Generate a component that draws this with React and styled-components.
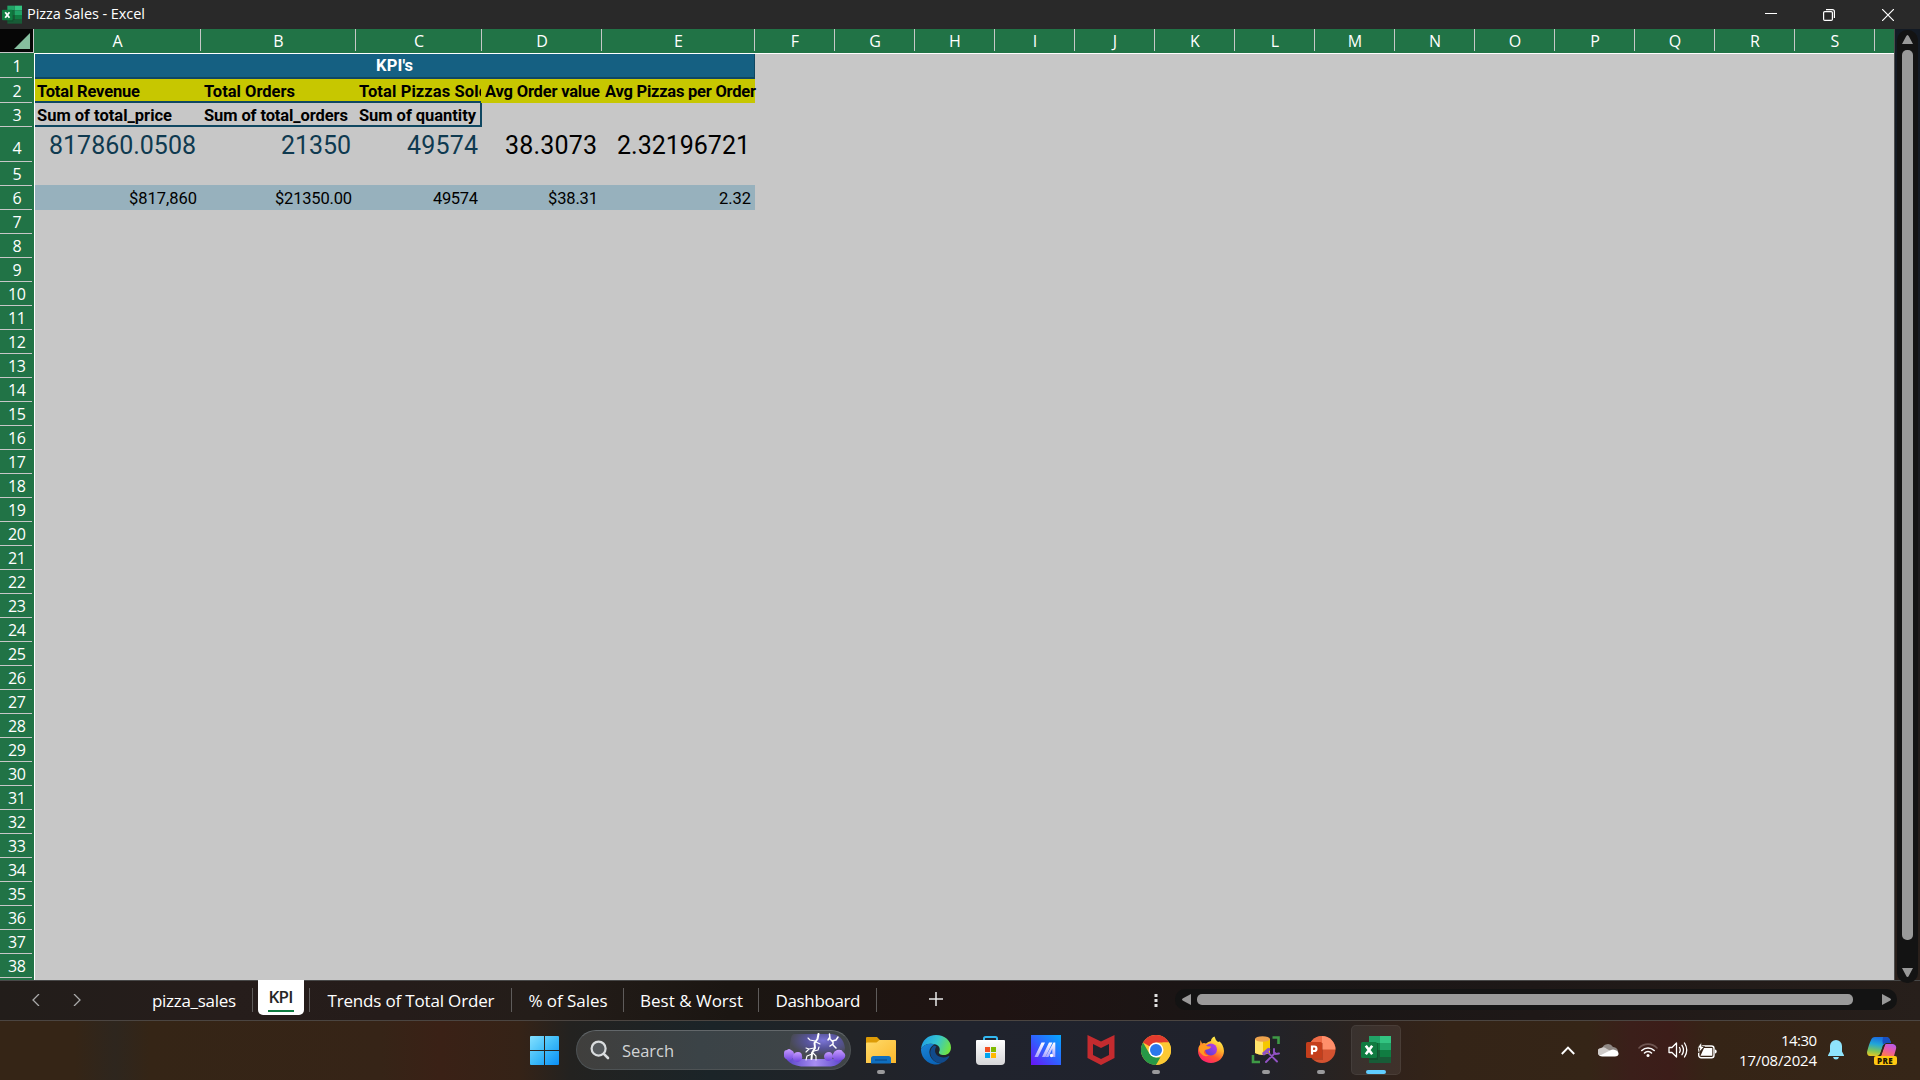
import React, { useLayoutEffect, useRef, useState } from "react";
import styled, { createGlobalStyle } from "styled-components";

const ui = `"Open Sans", "Noto Sans", sans-serif`;
const cellFont = `Roboto, "Liberation Sans", sans-serif`;

const Global = createGlobalStyle`
  *, *::before, *::after { box-sizing: border-box; }
  html, body { margin: 0; padding: 0; background: #262626; overflow: hidden; }
  svg { display: block; flex: none; }
`;

const FitSpan = styled.span`
  display: block;
  flex: none;
  white-space: pre;
`;

function Fit({ width, children }) {
  const ref = useRef(null);
  const [spacing, setSpacing] = useState(null);
  useLayoutEffect(() => {
    const range = document.createRange();
    range.selectNodeContents(ref.current);
    const natural = range.getBoundingClientRect().width;
    setSpacing((width - natural) / Math.max(1, String(children).length - 1));
  }, [width, children]);
  return (
    <FitSpan ref={ref} style={spacing === null ? undefined : { letterSpacing: spacing + "px", marginRight: -spacing + "px" }}>
      {children}
    </FitSpan>
  );
}

/* ---------- window ---------- */
const Window = styled.div`
  width: 1920px;
  height: 1080px;
  display: flex;
  flex-direction: column;
  overflow: hidden;
  background: #262626;
  font-family: ${ui};
`;

const TitleBar = styled.header`
  height: 29px;
  flex: none;
  display: flex;
  align-items: center;
  background: #292929;
  color: #fff;
  padding-left: 2px;
`;

const Title = styled.div`
  flex: 1;
  padding-left: 5px;
  font-size: 14.5px;
  line-height: 28px;
  height: 29px;
  display: flex;
`;

const WindowButtons = styled.div`
  display: flex;
  align-items: center;
  padding-right: 3px;
`;

const WindowButton = styled.div`
  width: 58.5px;
  height: 29px;
  display: flex;
  align-items: center;
  justify-content: center;
`;

const Workspace = styled.main`
  height: 951px;
  flex: none;
  display: flex;
  background: #1b1a1a;
`;

const Sheet = styled.section`
  width: 1894px;
  flex: none;
  display: flex;
  flex-direction: column;
  background: #c7c7c7;
`;

const ColumnHeads = styled.div`
  height: 24px;
  flex: none;
  display: flex;
  align-items: flex-start;
  background: #217346;
  color: #fff;
`;

const Corner = styled.div`
  width: 34px;
  height: 23px;
  flex: none;
  background: #060606;
  border-right: 1px solid #c7c7c7;
  display: flex;
  align-items: flex-end;
  justify-content: flex-end;
  padding: 0 3px 3px 0;
`;

const ColumnHead = styled.div`
  width: ${(p) => p.$w}px;
  height: 22px;
  flex: none;
  border-right: 1px solid #c7c7c7;
  font-size: 16px;
  line-height: 25px;
  padding-left: 1px;
  text-align: center;
`;

const SheetBody = styled.div`
  height: 927px;
  display: flex;
`;

const RowHeads = styled.div`
  width: 34px;
  flex: none;
  background: #217346;
  color: #fff;
  padding-right: 2px;
  margin-top: -1px;
  border-top: 1px solid #c7c7c7;
  overflow: hidden;
`;

const RowHead = styled.div`
  height: ${(p) => p.$h}px;
  border-bottom: 1px solid #c7c7c7;
  font-size: 16px;
  line-height: ${(p) => p.$h + (p.$h > 30 ? 7 : 1)}px;
  display: flex;
  justify-content: center;
  padding-left: 2px;
`;

const Cells = styled.div`
  flex: 1;
  border-left: 1px solid #fff;
  border-top: 1px solid #fff;
  font-family: ${cellFont};
  color: #000;
  display: flex;
  flex-direction: column;
  align-items: flex-start;
`;

const MergedTitle = styled.div`
  width: 720px;
  height: 25px;
  background: #156082;
  border-bottom: 2px solid #0f4761;
  border-right: 1px solid #0f4761;
  color: #fff;
  font-weight: 700;
  font-size: 16.5px;
  line-height: 23px;
  display: flex;
  justify-content: center;
`;

const HeadingRow = styled.div`
  width: 720px;
  height: 24px;
  background: #c7c700;
  display: flex;
  font-weight: 700;
  font-size: 16.5px;
  line-height: 25px;
`;

const PivotRow = styled(HeadingRow)`
  background: transparent;
`;

const TextCell = styled.div`
  width: ${(p) => p.$w}px;
  flex: none;
  padding-left: ${(p) => p.$pad ?? 2}px;
  display: flex;
  overflow: ${(p) => (p.$clip ? "hidden" : "visible")};
  border-bottom: ${(p) => (p.$line ? "2px solid #0f4761" : "0")};
  border-right: ${(p) => (p.$edge ? "2px solid #0f4761" : "0")};
`;

const BigRow = styled.div`
  width: 720px;
  height: 58px;
  display: flex;
  font-size: 25px;
  line-height: 38px;
`;

const TotalsRow = styled.div`
  width: 720px;
  height: 25px;
  background: #97b1bd;
  display: flex;
  font-size: 16.5px;
  line-height: 27px;
`;

const NumberCell = styled.div`
  width: ${(p) => p.$w}px;
  flex: none;
  display: flex;
  justify-content: flex-end;
  padding-right: ${(p) => p.$pad ?? 4}px;
  color: ${(p) => (p.$pivot ? "#0f3a50" : "#000")};
`;

const VerticalGutter = styled.aside`
  flex: 1;
  padding: 1px 2px 0 2px;
  border-left: 1px solid #4b4b4b;
  background: linear-gradient(#131a24, #171b22 30%, #201b1a 70%, #2a201b);
`;

const VerticalTrack = styled.div`
  height: 953px;
  width: 21px;
  position: relative;
  border-radius: 10px;
  background: #131313;
  display: flex;
  flex-direction: column;
  align-items: center;
  padding-top: 5px;
`;

const VerticalThumb = styled.div`
  width: 11px;
  height: 890px;
  margin: 6px 0 28px;
  border-radius: 5px;
  background: #999;
`;

/* ---------- sheet tabs ---------- */
const TabBar = styled.nav`
  height: 40px;
  flex: none;
  display: flex;
  align-items: flex-start;
  background: linear-gradient(90deg, #221d1a 0, #261d1b 12%, #251c1a 20%, #241d19 28%, #1b1612 38%, #1f1312 52%, #191616 66%, #1e1817 80%, #271f1b 100%);
  box-shadow: inset 0 1px #484848;
  color: #fff;
  font-size: 17px;
`;

const TabArrows = styled.div`
  width: 135px;
  height: 39px;
  display: flex;
  align-items: center;
  gap: 33px;
  padding-left: 32px;
`;

const Tab = styled.div`
  width: ${(p) => p.$w}px;
  height: 40px;
  flex: none;
  display: flex;
  justify-content: center;
  padding-left: 1px;
  line-height: 41px;
`;

const TabDivider = styled.div`
  width: 1px;
  height: 24px;
  margin-top: 8px;
  flex: none;
  background: #5f5c5b;
`;

const ActiveTab = styled.div`
  width: 46px;
  height: 35px;
  margin: 0 5px;
  flex: none;
  background: #fff;
  border-radius: 0 0 5px 5px;
  color: #262626;
  font-weight: 600;
  display: flex;
  flex-direction: column;
  align-items: center;
  line-height: 33px;
`;

const ActiveMark = styled.div`
  width: 26px;
  height: 2px;
  margin-top: -3px;
  flex: none;
  background: #107c41;
`;

const AddSheet = styled.div`
  width: 118px;
  height: 38px;
  display: flex;
  align-items: center;
  justify-content: center;
`;

const BarSpacer = styled.div`
  flex: 1;
`;

const HorizontalTrack = styled.div`
  width: 722px;
  height: 21px;
  margin: 9px 23px 0 17px;
  border-radius: 10px;
  background: #131313;
  display: flex;
  align-items: center;
  padding-left: 7px;
`;

const HorizontalThumb = styled.div`
  width: 656px;
  height: 11px;
  margin: 0 29px 0 6px;
  border-radius: 5px;
  background: #999;
`;

/* ---------- taskbar ---------- */
const Taskbar = styled.footer`
  height: 60px;
  flex: none;
  display: flex;
  border-top: 1px solid #4b4541;
  color: #fff;
  background: linear-gradient(90deg, #352516 0, #352516 75px, #2e261e 115px, #352516 150px, #362417 380px, #3a2116 440px, #352317 520px, #232220 570px, #1b2428 710px, #212328 850px, #20232d 960px, #20222c 1240px, #262323 1320px, #30221b 1390px, #342417 1450px, #352517 1590px, #3b1f1a 1630px, #3c1d19 1670px, #352416 1710px, #362618 1920px);
`;

const StartButton = styled.div`
  width: 576px;
  flex: none;
  padding: 15px 0 0 530px;
`;

const SearchBox = styled.div`
  width: 275px;
  height: 40px;
  margin-top: 9px;
  flex: none;
  display: flex;
  align-items: center;
  border-radius: 20px;
  border: 1px solid #4e5355;
  border-top-color: #62676a;
  background: linear-gradient(90deg, #403f3d, #3b4347 45%, #404548);
  padding: 0 4px 0 13px;
  color: #d2d4d5;
  font-size: 16.5px;
`;

const SearchLabel = styled.div`
  flex: 1;
  display: flex;
  padding-left: 12px;
  line-height: 41px;
`;

const Apps = styled.div`
  display: flex;
  padding-left: 2.5px;
  flex: 1;
`;

const AppSlot = styled.div`
  width: 55px;
  height: 59px;
  flex: none;
  display: flex;
  justify-content: center;
  padding-top: 4px;
`;

const AppTile = styled.div`
  width: 50px;
  height: 50px;
  border-radius: 5px;
  display: flex;
  flex-direction: column;
  align-items: center;
  justify-content: space-between;
  padding: 10px 0 1px;
  background: ${(p) => (p.$active ? "rgba(255,255,255,0.07)" : "transparent")};
  box-shadow: ${(p) => (p.$active ? "inset 0 0 0 1px rgba(255,255,255,0.06)" : "none")};
`;

const RunningMark = styled.div`
  width: ${(p) => (p.$active ? 20 : 8)}px;
  height: 4px;
  border-radius: 2px;
  background: ${(p) => (p.$active ? "#60cdff" : "#9a9a9c")};
`;

const Tray = styled.div`
  width: 359px;
  flex: none;
  display: flex;
  align-items: center;
  height: 58px;
`;

const TrayItem = styled.div`
  width: ${(p) => p.$w}px;
  flex: none;
  display: flex;
  justify-content: center;
`;

const Clock = styled.div`
  width: 94px;
  flex: none;
  display: flex;
  flex-direction: column;
  align-items: flex-end;
  font-size: 15px;
  line-height: 20px;
  padding-bottom: 1px;
`;

/* ---------- icons ---------- */
const ExcelIcon = ({ size }) => (
  <svg width={size} height={size} viewBox="0 0 30 30">
    <rect x="8" y="1" width="11" height="7" fill="#21a366" />
    <rect x="19" y="1" width="11" height="7" fill="#33c481" />
    <rect x="8" y="8" width="11" height="7" fill="#107c41" />
    <rect x="19" y="8" width="11" height="7" fill="#21a366" />
    <rect x="8" y="15" width="11" height="7" fill="#185c37" />
    <rect x="19" y="15" width="11" height="7" fill="#107c41" />
    <rect x="8" y="22" width="22" height="6" fill="#185c37" />
    <rect x="8" y="8" width="9" height="17" fill="#0b4a28" opacity=".5" />
    <rect x="0" y="7" width="16" height="16" rx="1.5" fill="#107c41" />
    <path d="M4.800 10.800l6.400 8.400M11.200 10.800l-6.400 8.400" stroke="#fff" strokeWidth="2.700" />
  </svg>
);

const StartIcon = () => (
  <svg width="29" height="29" viewBox="0 0 29 29">
    <defs>
      <linearGradient id="win" x1="0" y1="0" x2="1" y2="1">
        <stop offset="0" stopColor="#84e0ff" />
        <stop offset=".5" stopColor="#3fbcf8" />
        <stop offset="1" stopColor="#0a8ef5" />
      </linearGradient>
    </defs>
    <path d="M1 0h13v14H0V1a1 1 0 011-1zM15 0h13a1 1 0 011 1v13H15zM0 15h14v14H1a1 1 0 01-1-1zM15 15h14v13a1 1 0 01-1 1H15z" fill="url(#win)" />
  </svg>
);

const SearchIcon = () => (
  <svg width="20" height="20" viewBox="0 0 20 20" fill="none" stroke="#d9dcde">
    <circle cx="8.6" cy="8.6" r="7" strokeWidth="2.2" fill="#55595c" />
    <path d="M13.8 13.8l4.2 4.2" strokeWidth="2.6" strokeLinecap="round" />
  </svg>
);

const StormArt = () => (
  <svg width="62" height="34" viewBox="0 0 62 34">
    <defs>
      <radialGradient id="sky" cx=".6" cy=".25" r=".6">
        <stop offset="0" stopColor="#7a74d6" />
        <stop offset=".5" stopColor="#57549a" />
        <stop offset="1" stopColor="#484a52" />
      </radialGradient>
      <linearGradient id="tree" x1="0" y1="0" x2="0" y2="1">
        <stop offset="0" stopColor="#c79bff" />
        <stop offset="1" stopColor="#6f45dd" />
      </linearGradient>
      <linearGradient id="land">
        <stop offset="0" stopColor="#5a45c8" />
        <stop offset=".5" stopColor="#a78ef2" />
        <stop offset="1" stopColor="#5a45c8" />
      </linearGradient>
    </defs>
    <path d="M10 1h38q11 1 13 14-1 8-6 12H8Q4 18 7 5q1-4 3-4z" fill="url(#sky)" />
    <path d="M3 27q4 5 14 6.500h30q8-1 12-7.500H3z" fill="url(#land)" />
    <g fill="url(#tree)">
      <path d="M0 20q0-3 3-3 2-2 4 0 3 1 3 4 1 4-2 5l-3 2-3-2q-3-2-2-6z" />
      <path d="M9 23q1-4 5-4 4 0 4 4 1 3-2 5-3 2-5 0-3-2-2-5z" />
      <path d="M49 21q1-3 4-4 5-1 6 2 3 2 2 5-1 3-5 3-3 3-6 0-2-3-1-6z" />
      <path d="M40 23q1-4 5-4 3 0 4 4 0 4-4 5-5 0-5-5z" />
    </g>
    <g fill="none" stroke="#fff" strokeLinejoin="round" strokeLinecap="round">
      <path d="M34.500 1l-1 5-3 4 .5 5-3 5-.5 6" strokeWidth="2" />
      <path d="M31 8l-5-1-2-2M32 9l4 2M30 15l-5 1-3 3M25 16l-3-1M30 18l4-1 1-3M28 21l-5 2-1 4M29 20l3 3v4" strokeWidth="1.100" />
      <path d="M45.500 1l.5 5 3 3 0 3 3 3M46 4l-2 3M48 8l4-1 2-3M49 11l-3 2" strokeWidth="1.500" />
    </g>
  </svg>
);

const FolderIcon = () => (
  <svg width="30" height="30" viewBox="0 0 30 30">
    <defs>
      <linearGradient id="fold" x1="0" y1="0" x2="1" y2="1">
        <stop offset="0" stopColor="#ffdb6b" />
        <stop offset="1" stopColor="#fbb72b" />
      </linearGradient>
    </defs>
    <path d="M0 3a1 1 0 011-1h10l3 3h14v5H0z" fill="#dd9b06" />
    <path d="M0 8.500q0-1 1-1h9.500l3-2.500H29a1 1 0 011 1v22H0z" fill="url(#fold)" />
    <path d="M5 28.500v-5a2.500 2.500 0 012.500-2.500h15a2.500 2.500 0 012.500 2.500v5z" fill="#0f6fc0" />
    <path d="M9 25h12" stroke="#0a4a8a" strokeWidth="1.200" />
  </svg>
);

const EdgeIcon = () => (
  <svg width="30" height="30" viewBox="0 0 30 30">
    <defs>
      <linearGradient id="eg" x1="0" y1=".3" x2="1" y2=".6">
        <stop offset="0" stopColor="#1f9fe6" />
        <stop offset=".5" stopColor="#35c5cf" />
        <stop offset="1" stopColor="#72e43e" />
      </linearGradient>
      <linearGradient id="eb" x1="0" y1="0" x2=".5" y2="1">
        <stop offset="0" stopColor="#1b86d6" />
        <stop offset="1" stopColor="#0a64b8" />
      </linearGradient>
    </defs>
    <path d="M0 14C1 5 7 0 15 0c9 0 15 6 15 12.500 0 5-3.500 7.500-7 7.500-4 0-5.500-1.500-5-3 1.500-2 1-6-3-7.500C9 7.500 3 9 0 14z" fill="url(#eg)" />
    <path d="M0 14c3-5 9-6 13.500-4.500C10 11 8 14 8.500 18c.7 6 5.500 10 12 10.500A15 15 0 010 14z" fill="url(#eb)" />
    <path d="M13 10.500c-4 3-5 8-2 12.500 3 4.500 8 6.500 12 4 2-1 4-3 5.300-5.200.2-.6-.5-1-1-.6-5 2.500-11 1-12.800-3.200-1-2.500-.3-5 1-6.500z" fill="#114a8b" />
  </svg>
);

const StoreIcon = () => (
  <svg width="30" height="30" viewBox="0 0 30 30">
    <defs>
      <linearGradient id="bag" x1="0" y1="0" x2="0" y2="1">
        <stop offset="0" stopColor="#fff" />
        <stop offset="1" stopColor="#d6d6d8" />
      </linearGradient>
    </defs>
    <path d="M8 7V3.500Q8 2 9.500 2h10q1.500 0 1.500 1.500V7" fill="none" stroke="#33b8f0" strokeWidth="2" />
    <path d="M0 6q0-1 1-1h27q1 0 1 1v20q0 4-4 4H4q-4 0-4-4z" fill="url(#bag)" />
    <path d="M9 12h5v5H9z" fill="#f25022" />
    <path d="M15 12h5v5h-5z" fill="#7fba00" />
    <path d="M9 18h5v5H9z" fill="#00a4ef" />
    <path d="M15 18h5v5h-5z" fill="#ffb900" />
  </svg>
);

const AsusIcon = () => (
  <svg width="30" height="30" viewBox="0 0 30 30">
    <defs>
      <linearGradient id="asus" x1="0" y1="1" x2="1" y2="0">
        <stop offset="0" stopColor="#6a12f5" />
        <stop offset=".5" stopColor="#2f62ff" />
        <stop offset="1" stopColor="#05a8ff" />
      </linearGradient>
      <linearGradient id="asusm" x1="0" y1="0" x2="0" y2="1">
        <stop offset="0" stopColor="#fff" />
        <stop offset="1" stopColor="#a9a4ff" />
      </linearGradient>
    </defs>
    <rect width="30" height="30" fill="url(#asus)" />
    <g fill="url(#asusm)">
      <path d="M10.500 7.500H14L7 22H3.500zM18 7.500h3.500L14.500 22H11z" />
      <path d="M22.500 7.500h1.800V22h-3v-8.500L17.500 22h-3z" />
    </g>
    <circle cx="20.500" cy="20.500" r="1.700" fill="#fff" />
  </svg>
);

const McAfeeIcon = () => (
  <svg width="28" height="30" viewBox="0 0 28 30">
    <path fillRule="evenodd" d="M.5 0L14 6.500 27.500 0v23L14 30 .5 23zM6 9v11l8 4 8-4V9l-8 4z" fill="#c42b2f" />
  </svg>
);

const ChromeIcon = () => (
  <svg width="30" height="30" viewBox="0 0 30 30">
    <circle cx="15" cy="15" r="15" fill="#fcc934" />
    <path d="M2 7.500A15 15 0 0128 7.500H15L8.500 11.300z" fill="#e33b2e" />
    <path d="M2 7.500L8.500 18.800 15 22.500h6.500L15 30A15 15 0 012 7.500z" fill="#279847" />
    <path d="M28 7.500A15 15 0 0115 30l6.500-11.200V7.500z" fill="#fcc934" />
    <circle cx="15" cy="15" r="7.500" fill="#fff" />
    <circle cx="15" cy="15" r="6" fill="#2b78ec" />
  </svg>
);

const FirefoxIcon = () => (
  <svg width="28" height="30" viewBox="0 0 28 30">
    <defs>
      <linearGradient id="ff" x1=".8" y1=".1" x2=".3" y2="1">
        <stop offset="0" stopColor="#fff04a" />
        <stop offset=".35" stopColor="#ffb02c" />
        <stop offset=".65" stopColor="#ff5530" />
        <stop offset="1" stopColor="#ff1f70" />
      </linearGradient>
      <linearGradient id="ffp" x1="1" y1="0" x2="0" y2="1">
        <stop offset="0" stopColor="#c63ce8" />
        <stop offset="1" stopColor="#4c3fd0" />
      </linearGradient>
    </defs>
    <path d="M3.500 5l1.500 3.500q2-1 4 0 2-2 5-2.500 0-3 3.500-4.500 1 4 3.500 5.500l1.500-.5q4 3 4.500 9.500C27 23 21 28 14 28S1 23 1 16c0-3 1-5 2-6z" fill="url(#ff)" />
    <circle cx="14" cy="14.500" r="6" fill="url(#ffp)" />
    <path d="M2 11q3-2 6-1 3 2 6 1.500 0 2-4 3-3 0-3 3 1 3 5 3-5 2-8-2-3-3-2-7.500z" fill="#ff9a20" />
  </svg>
);

const SqlIcon = () => (
  <svg width="30" height="30" viewBox="0 0 30 30">
    <path d="M4 4v14q7 3 15 0V4z" fill="#f6c800" />
    <path d="M4 4v14q4 2 8 2V4z" fill="#ffe36a" />
    <ellipse cx="11.500" cy="4" rx="7.500" ry="2.800" fill="#eda34d" />
    <path d="M21.500 2.500h6v6.500" fill="none" stroke="#3f9a46" strokeWidth="2.600" />
    <path d="M2 20v7h7" fill="none" stroke="#3f9a46" strokeWidth="2.600" />
    <g fill="none" stroke="#9152c4" strokeWidth="1.900" strokeLinecap="round">
      <path d="M16.500 17l9.500 9.500M24 18l-9 9M23 14v3.500l1.500 1.500 3.500-.5" />
      <path d="M13 18.500l4.500-4" strokeWidth="3.400" />
    </g>
  </svg>
);

const PowerPointIcon = () => (
  <svg width="30" height="30" viewBox="0 0 30 30">
    <circle cx="16" cy="14.500" r="13.500" fill="#d35230" />
    <path d="M16 1v13.500H2.500A13.500 13.500 0 0116 1z" fill="#ed6c47" />
    <path d="M16 1a13.500 13.500 0 0113.500 13.500H16z" fill="#ff8f6b" />
    <path d="M3 8h14v17H6z" fill="#8e2a12" opacity=".4" />
    <rect x="0" y="7" width="16" height="16" rx="1.500" fill="#c43e1c" />
    <path d="M6 19.500v-8h2.200a2.200 2.200 0 010 4.500H6" fill="none" stroke="#fff" strokeWidth="2.200" />
  </svg>
);

const CloudIcon = () => (
  <svg width="21" height="14" viewBox="0 0 21 14">
    <path d="M4 6a6 6 0 0111-2 5 5 0 015 6L10 12z" fill="#8f8884" />
    <path d="M3 5q3-2 6 1l6 3-9 4H4A4 4 0 013 5z" fill="#cfcbc9" />
    <path d="M3 12l10-5q2-1 4 0 4 1 3.500 4.500Q20 13.500 17 13.500H4.500Q2.500 13.500 1 12z" fill="#fff" />
  </svg>
);

const WifiIcon = () => (
  <svg width="20" height="16" viewBox="0 0 20 16" fill="none" stroke="#fff" strokeWidth="1.600" strokeLinecap="round">
    <path d="M1 6a12.500 12.500 0 0118 0" stroke="#6f5652" />
    <path d="M3.800 8.500a9 9 0 0112.400 0M6.500 11a5 5 0 017 0" />
    <circle cx="10" cy="13.500" r="1.500" fill="#fff" stroke="none" />
  </svg>
);

const SpeakerIcon = () => (
  <svg width="20" height="18" viewBox="0 0 20 18" fill="none" stroke="#fff" strokeWidth="1.300" strokeLinecap="round" strokeLinejoin="round">
    <path d="M1 6.500h3l4.500-4.500v14L4 11.500H1z" />
    <path d="M11.500 6.500q1.500 2.500 0 5M14 4.300q3 4.700 0 9.400M16.500 2q4.500 7 0 14" />
  </svg>
);

const BatteryIcon = () => (
  <svg width="20" height="17" viewBox="0 0 20 17">
    <rect x="1.700" y="4" width="15.300" height="11.800" rx="2.500" fill="none" stroke="#fff" strokeWidth="1.400" />
    <path d="M7 6h8.300v7.800H3.500z" fill="#fff" />
    <path d="M18 7.500q1.700 0 1.700 2t-1.700 2z" fill="#fff" />
    <path d="M4.500 0L.3 6h2.500L1.500 11 7.500 4.500H4.800z" fill="#fff" stroke="#352416" strokeWidth=".8" />
  </svg>
);

const BellIcon = () => (
  <svg width="16" height="20" viewBox="0 0 16 20" fill="#8fe3fb">
    <path d="M8 0a6 6 0 016 6v5.500l2 3.700q.2.800-.7.800H.7q-.9 0-.7-.8l2-3.700V6a6 6 0 016-6zM5 17h6q-.6 2.500-3 2.500T5 17z" />
  </svg>
);

const CopilotWrap = styled.div`
  position: relative;
  width: 30px;
  height: 29px;
`;

const PreBadge = styled.div`
  position: absolute;
  left: 7px;
  top: 20px;
  width: 23px;
  height: 9px;
  border-radius: 2px;
  background: #ffc812;
  color: #1c1600;
  font: 800 8px/9px ${ui};
  text-align: center;
  letter-spacing: 0.4px;
`;

const CopilotIcon = () => (
  <CopilotWrap>
    <svg width="30" height="29" viewBox="0 0 30 29">
      <defs>
        <linearGradient id="cpa" x1=".3" y1="0" x2=".1" y2="1">
          <stop offset="0" stopColor="#1b6fe0" />
          <stop offset=".35" stopColor="#21a6d8" />
          <stop offset=".7" stopColor="#7cc45a" />
          <stop offset="1" stopColor="#f2c81c" />
        </linearGradient>
        <linearGradient id="cpb" x1=".8" y1="0" x2=".3" y2="1">
          <stop offset="0" stopColor="#b45cf0" />
          <stop offset=".5" stopColor="#e85aa8" />
          <stop offset="1" stopColor="#ff7a50" />
        </linearGradient>
      </defs>
      <path d="M8 1h11q3 0 4 3l1 3h-5q-2 0-3 3l-3 8q-1 2-3 2H3q-3 0-3-4Q2 8 4 4q1-3 4-3z" fill="url(#cpa)" />
      <path d="M16 1h3q3 0 4 3l1 3h-5q-2 0-3 2-1-4 0-8z" fill="#184fc0" />
      <path d="M19 8h7q4 1 3 5l-2 7H14l3-9q1-3 2-3z" fill="url(#cpb)" />
      <path d="M16 9l2 0-4 11h-3q2-1 3-4z" fill="#352416" />
    </svg>
    <PreBadge>PRE</PreBadge>
  </CopilotWrap>
);

/* ---------- data ---------- */
const columns = [
  ["A", 167], ["B", 155], ["C", 126], ["D", 120], ["E", 153],
  ..."FGHIJKLMNOPQRS".split("").map((l) => [l, 80]),
];
const rowHeights = [25, 25, 24, 35, 24, 24, ...Array(32).fill(24)];
const tabs = [
  ["Trends of Total Order", 201, 167],
  ["% of Sales", 111, 79],
  ["Best & Worst", 134, 103],
  ["Dashboard", 117, 85],
];
const apps = [
  { icon: <FolderIcon />, running: true },
  { icon: <EdgeIcon /> },
  { icon: <StoreIcon /> },
  { icon: <AsusIcon /> },
  { icon: <McAfeeIcon /> },
  { icon: <ChromeIcon />, running: true },
  { icon: <FirefoxIcon /> },
  { icon: <SqlIcon />, running: true },
  { icon: <PowerPointIcon />, running: true },
  { icon: <ExcelIcon size={30} />, running: true, active: true },
];

export default function App() {
  return (
    <>
      <Global />
      <Window>
        <TitleBar>
          <ExcelIcon size={20} />
          <Title><Fit width={118}>Pizza Sales - Excel</Fit></Title>
          <WindowButtons>
            <WindowButton>
              <svg width="12" height="12"><path d="M0 4.500h12" stroke="#fff" /></svg>
            </WindowButton>
            <WindowButton>
              <svg width="12" height="12" viewBox="0 0 12 12" fill="none" stroke="#fff" strokeWidth="1.200">
                <rect x=".6" y="2.600" width="8.800" height="8.800" rx="1.200" />
                <path d="M3 .6h6.400q2 0 2 2V9" />
              </svg>
            </WindowButton>
            <WindowButton>
              <svg width="12" height="12" viewBox="0 0 12 12" stroke="#fff" strokeWidth="1.200"><path d="M0 0l12 12M12 0L0 12" /></svg>
            </WindowButton>
          </WindowButtons>
        </TitleBar>

        <Workspace>
          <Sheet>
            <ColumnHeads>
              <Corner>
                <svg width="16" height="16"><path d="M16 0v16H0z" fill="#86bf9f" /></svg>
              </Corner>
              {columns.map(([name, w]) => <ColumnHead key={name} $w={w}>{name}</ColumnHead>)}
            </ColumnHeads>
            <SheetBody>
              <RowHeads>
                {rowHeights.map((h, i) => (
                  <RowHead key={i} $h={h}>
                    <Fit width={i < 9 ? 9 : 18}>{String(i + 1)}</Fit>
                  </RowHead>
                ))}
              </RowHeads>
              <Cells>
                <MergedTitle><Fit width={37}>KPI's</Fit></MergedTitle>
                <HeadingRow>
                  <TextCell $w={167} $line><Fit width={103}>Total Revenue</Fit></TextCell>
                  <TextCell $w={155} $line><Fit width={91}>Total Orders</Fit></TextCell>
                  <TextCell $w={124} $clip $line><Fit width={129}>Total Pizzas Sold</Fit></TextCell>
                  <TextCell $w={121} $pad={4}><Fit width={115}>Avg Order value</Fit></TextCell>
                  <TextCell $w={153} $pad={3}><Fit width={151}>Avg Pizzas per Order</Fit></TextCell>
                </HeadingRow>
                <PivotRow>
                  <TextCell $w={167} $line><Fit width={135}>Sum of total_price</Fit></TextCell>
                  <TextCell $w={155} $line><Fit width={144}>Sum of total_orders</Fit></TextCell>
                  <TextCell $w={125} $line $edge><Fit width={117}>Sum of quantity</Fit></TextCell>
                </PivotRow>
                <BigRow>
                  <NumberCell $w={165} $pivot><Fit width={147}>817860.0508</Fit></NumberCell>
                  <NumberCell $w={155} $pivot><Fit width={70}>21350</Fit></NumberCell>
                  <NumberCell $w={126} $pivot $pad={3}><Fit width={71}>49574</Fit></NumberCell>
                  <NumberCell $w={120}><Fit width={92}>38.3073</Fit></NumberCell>
                  <NumberCell $w={153}><Fit width={133}>2.32196721</Fit></NumberCell>
                </BigRow>
                <TotalsRow>
                  <NumberCell $w={165} $pad={3}><Fit width={68}>$817,860</Fit></NumberCell>
                  <NumberCell $w={155} $pad={3}><Fit width={77}>$21350.00</Fit></NumberCell>
                  <NumberCell $w={126} $pad={3}><Fit width={45}>49574</Fit></NumberCell>
                  <NumberCell $w={120} $pad={3}><Fit width={50}>$38.31</Fit></NumberCell>
                  <NumberCell $w={153} $pad={3}><Fit width={32}>2.32</Fit></NumberCell>
                </TotalsRow>
              </Cells>
            </SheetBody>
          </Sheet>
          <VerticalGutter>
            <VerticalTrack>
              <svg width="11" height="9"><path d="M5.500 0q.8 0 1.500 1.500l4 7.500H0l4-7.500Q4.700 0 5.500 0z" fill="#999" /></svg>
              <VerticalThumb />
              <svg width="11" height="9"><path d="M5.500 9q-.8 0-1.500-1.500L0 0h11L7 7.500Q6.300 9 5.500 9z" fill="#999" /></svg>
            </VerticalTrack>
          </VerticalGutter>
        </Workspace>

        <TabBar>
          <TabArrows>
            <svg width="8" height="12" fill="none" stroke="#aaa" strokeWidth="1.300"><path d="M7 0L1 6l6 6" /></svg>
            <svg width="8" height="12" fill="none" stroke="#aaa" strokeWidth="1.300"><path d="M1 0l6 6-6 6" /></svg>
          </TabArrows>
          <Tab $w={117}><Fit width={84}>pizza_sales</Fit></Tab>
          <TabDivider />
          <ActiveTab><Fit width={25}>KPI</Fit><ActiveMark /></ActiveTab>
          <TabDivider />
          {tabs.map(([name, w, tw]) => (
            <React.Fragment key={name}>
              <Tab $w={w}><Fit width={tw}>{name}</Fit></Tab>
              <TabDivider />
            </React.Fragment>
          ))}
          <AddSheet>
            <svg width="14" height="14"><path d="M7 0v14M0 7h14" stroke="#e8e8e8" strokeWidth="1.500" /></svg>
          </AddSheet>
          <BarSpacer />
          <svg width="4" height="40"><path d="M.5 14h3v3h-3zM.5 19h3v3h-3zM.5 24h3v3h-3z" fill="#e0e0e0" /></svg>
          <HorizontalTrack>
            <svg width="9" height="11"><path d="M0 5.500Q0 4.700 1.500 4L9 0v11L1.500 7Q0 6.300 0 5.500z" fill="#999" /></svg>
            <HorizontalThumb />
            <svg width="9" height="11"><path d="M9 5.500Q9 4.700 7.500 4L0 0v11l7.500-4Q9 6.300 9 5.500z" fill="#999" /></svg>
          </HorizontalTrack>
        </TabBar>

        <Taskbar>
          <StartButton><StartIcon /></StartButton>
          <SearchBox>
            <SearchIcon />
            <SearchLabel><Fit width={52}>Search</Fit></SearchLabel>
            <StormArt />
          </SearchBox>
          <Apps>
            {apps.map((a, i) => (
              <AppSlot key={i}>
                <AppTile $active={a.active}>
                  {a.icon}
                  {a.running && <RunningMark $active={a.active} />}
                </AppTile>
              </AppSlot>
            ))}
          </Apps>
          <Tray>
            <TrayItem $w={14}>
              <svg width="14" height="9" fill="none" stroke="#fff" strokeWidth="1.900"><path d="M.8 8L7 1.600 13.200 8" /></svg>
            </TrayItem>
            <TrayItem $w={66}><CloudIcon /></TrayItem>
            <TrayItem $w={14}><WifiIcon /></TrayItem>
            <TrayItem $w={45}><SpeakerIcon /></TrayItem>
            <TrayItem $w={14}><BatteryIcon /></TrayItem>
            <TrayItem $w={9} />
            <Clock>
              <Fit width={36}>14:30</Fit>
              <Fit width={78}>17/08/2024</Fit>
            </Clock>
            <TrayItem $w={38}><BellIcon /></TrayItem>
            <TrayItem $w={53}><CopilotIcon /></TrayItem>
          </Tray>
        </Taskbar>
      </Window>
    </>
  );
}
